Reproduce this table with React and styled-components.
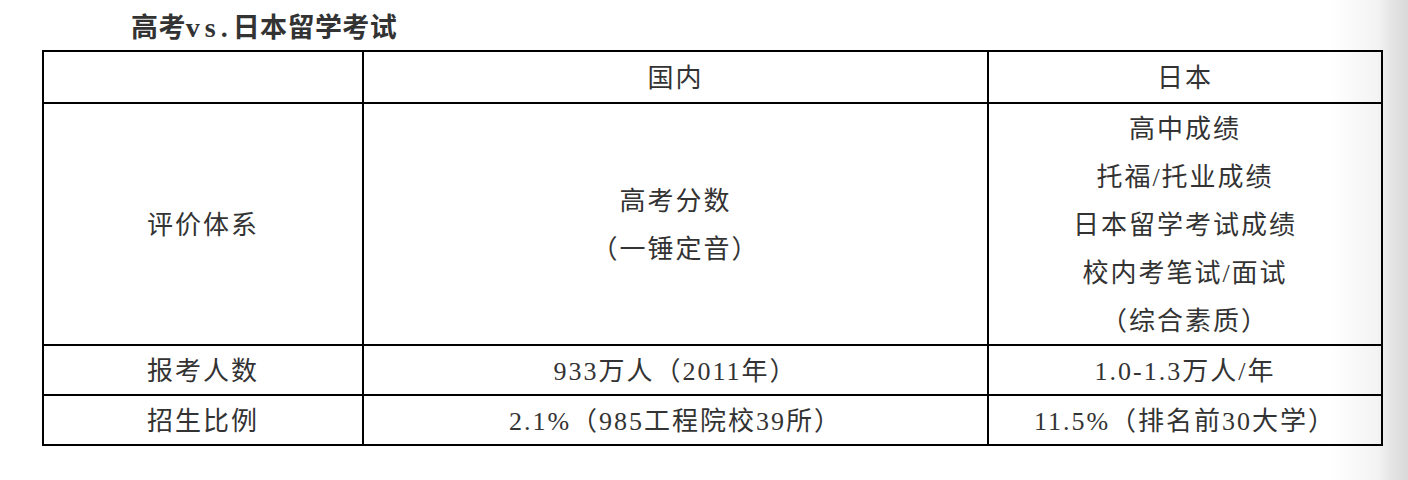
import React from 'react';
import styled, {createGlobalStyle} from 'styled-components';

const GlobalStyle = createGlobalStyle`
    html {
        background: linear-gradient(to right, #ffffff 1330px, #f3f3f3 1378px, #e6e6e6 1390px, #d9d9d9 1408px);
        min-height: 100%;
    }
    body {
        margin: 0;
        font-family: "Liberation Serif", "Noto Sans CJK SC", serif;
        color: #333;
    }
`;

const Page = styled.div`
    padding: 8px 0 0 42px;
`;

const Title = styled.h2`
    margin: 0 0 2px 89px;
    font-size: 27px;
    line-height: 40px;
    font-weight: bold;
    letter-spacing: 0.4px;
    color: #333;
`;

const Latin = styled.span`
    font-size: 28px;
    letter-spacing: 5px;
`;

const Table = styled.table`
    border-collapse: collapse;
    table-layout: fixed;
    width: 1339px;
    font-size: 26px;
    letter-spacing: 2px;
`;

const Cell = styled.td`
    border: 2px solid #000;
    padding: ${p => (p.$head ? '1px 0' : '0')};
    height: ${p => (p.$head ? '48px' : 'auto')};
    text-align: center;
    vertical-align: middle;
    color: #333;
`;

const Line = styled.div`
    padding-top: 4px;
    line-height: 44px;
`;

const rows = [
    {label: '报考人数', cn: '933万人（2011年）', jp: '1.0-1.3万人/年'},
    {label: '招生比例', cn: '2.1%（985工程院校39所）', jp: '11.5%（排名前30大学）'},
];

export default function App() {
    return (
        <>
            <GlobalStyle />
            <Page>
                <Title>高考<Latin>vs.</Latin>日本留学考试</Title>
                <Table>
                    <colgroup>
                        <col style={{width: 320}} />
                        <col style={{width: 625}} />
                        <col style={{width: 394}} />
                    </colgroup>
                    <tbody>
                        <tr>
                            <Cell $head></Cell>
                            <Cell $head><Line>国内</Line></Cell>
                            <Cell $head><Line>日本</Line></Cell>
                        </tr>
                        <tr>
                            <Cell><Line>评价体系</Line></Cell>
                            <Cell>
                                <Line>高考分数</Line>
                                <Line>（一锤定音）</Line>
                            </Cell>
                            <Cell>
                                <Line>高中成绩</Line>
                                <Line>托福/托业成绩</Line>
                                <Line>日本留学考试成绩</Line>
                                <Line>校内考笔试/面试</Line>
                                <Line>（综合素质）</Line>
                            </Cell>
                        </tr>
                        {rows.map(r => (
                            <tr key={r.label}>
                                <Cell><Line>{r.label}</Line></Cell>
                                <Cell><Line>{r.cn}</Line></Cell>
                                <Cell><Line>{r.jp}</Line></Cell>
                            </tr>
                        ))}
                    </tbody>
                </Table>
            </Page>
        </>
    );
}
